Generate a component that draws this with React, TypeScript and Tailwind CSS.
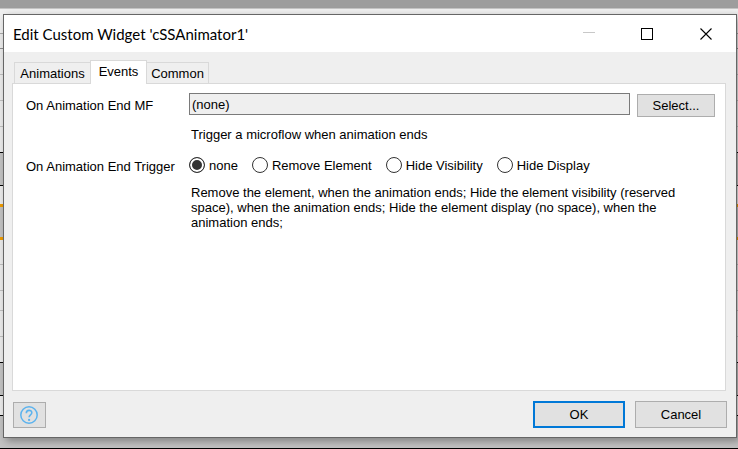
import { useState } from "react";

const ROWS = [
  "h-2 bg-[#9d9d9d]",
  "h-px bg-[#c4c4c4]",
  "h-6 bg-[#f0f0f0]",
  "h-px bg-[#a9a9a9]",
  "h-3.5 bg-[#ececec]",
  "h-px bg-[#8f8f8f]",
  "h-[25px] bg-[#ececec]",
  "h-px bg-[#c0c0c0]",
  "h-[25px] bg-[#ececec]",
  "h-px bg-[#c0c0c0]",
  "h-[25px] bg-[#ececec]",
  "h-px bg-[#c0c0c0]",
  "h-[25px] bg-[#ececec]",
  "h-px bg-black",
  "h-8 bg-[#c3c3c3]",
  "h-px bg-black",
  "h-[18px] bg-[#ececec]",
  "h-[3px] bg-[#f09c00]",
  "h-[30px] bg-[#c3c3c3]",
  "h-[3px] bg-[#f09c00]",
  "h-6 bg-[#ececec]",
  "h-px bg-[#c0c0c0]",
  "h-[25px] bg-[#ececec]",
  "h-px bg-[#c0c0c0]",
  "h-[19px] bg-[#ececec]",
  "h-px bg-[#c0c0c0]",
  "h-[25px] bg-[#ececec]",
  "h-px bg-[#c0c0c0]",
  "h-[25px] bg-[#ececec]",
  "h-px bg-black",
  "h-8 bg-[#c3c3c3]",
  "h-px bg-black",
  "h-[19px] bg-[#ececec]",
  "h-px bg-black",
  "h-8 bg-[#c3c3c3]",
  "h-px bg-black",
];

const TRIGGERS = ["none", "Remove Element", "Hide Visibility", "Hide Display"];

function TitleBar() {
  return (
    <header className="flex h-[37px] items-center justify-between bg-white pl-[9px]">
      <h1 className="font-['Lato','Open_Sans',sans-serif] text-[15px] leading-5">
        Edit Custom Widget 'cSSAnimator1'
      </h1>
      <div className="flex h-full">
        <button aria-label="Minimize" disabled className="flex w-[58px] items-center justify-center">
          <svg width="12" height="12" shapeRendering="crispEdges">
            <path d="M0 4.5h12" stroke="#c8c8c8" />
          </svg>
        </button>
        <button aria-label="Maximize" className="flex w-[58px] items-center justify-center">
          <svg width="12" height="12" fill="none" shapeRendering="crispEdges">
            <path d="M.5 .5h11v11h-11z" stroke="#000" />
          </svg>
        </button>
        <button aria-label="Close" className="flex w-[60px] items-center justify-center">
          <svg width="12" height="12" fill="none">
            <path d="M.5 .5l11 11M11.5 .5l-11 11" stroke="#000" strokeWidth="1.1" />
          </svg>
        </button>
      </div>
    </header>
  );
}

function Tabs() {
  return (
    <div role="tablist" className="relative z-10 -mb-px flex items-end pl-0.5">
      <button role="tab" aria-selected="false" className="h-[22px] w-[76px] border border-r-0 border-[#d9d9d9]">
        Animations
      </button>
      <button
        role="tab"
        aria-selected="true"
        className="h-6 w-[57px] border border-b-0 border-[#d9d9d9] bg-white pb-0.5"
      >
        Events
      </button>
      <button role="tab" aria-selected="false" className="h-[22px] w-[62px] border border-l-0 border-[#d9d9d9]">
        Common
      </button>
    </div>
  );
}

function EventsPanel() {
  const [trigger, setTrigger] = useState("none");
  return (
    <section
      role="tabpanel"
      className="grid grow grid-cols-[163px_1fr] content-start border border-[#d9d9d9] bg-white pt-[9px] pr-2.5 pl-[13px]"
    >
      <label htmlFor="microflow" className="pt-[5px]">
        On Animation End MF
      </label>
      <div className="flex items-start gap-[7px]">
        <input
          id="microflow"
          readOnly
          defaultValue="(none)"
          className="h-[22px] min-w-0 grow border border-[#7a7a7a] bg-[#efefef] px-0.5 outline-none"
        />
        <button className="mt-px h-[23px] w-[78px] border border-[#adadad] bg-[#e1e1e1]">Select...</button>
      </div>
      <p className="col-start-2 mt-2.5 pl-0.5">Trigger a microflow when animation ends</p>
      <span id="trigger-label" className="mt-[17px]">
        On Animation End Trigger
      </span>
      <div role="radiogroup" aria-labelledby="trigger-label" className="mt-[15px] flex gap-3.5">
        {TRIGGERS.map((name) => (
          <label key={name} className="flex h-4 items-center gap-1">
            <input
              type="radio"
              name="trigger"
              checked={trigger === name}
              onChange={() => setTrigger(name)}
              className="size-4 appearance-none rounded-full border border-[#333] bg-white checked:bg-[#333] checked:shadow-[inset_0_0_0_2px_white]"
            />
            {name}
          </label>
        ))}
      </div>
      <p className="col-start-2 mt-[11px] max-w-[500px] pl-0.5">
        Remove the element, when the animation ends; Hide the element visibility (reserved space), when the
        animation ends; Hide the element display (no space), when the animation ends;
      </p>
    </section>
  );
}

function Footer() {
  return (
    <footer className="flex items-end gap-2.5 pt-2.5 pl-px">
      <button
        aria-label="Help"
        className="mr-auto flex h-[26px] w-[33px] items-center justify-center border border-[#adadad] bg-[#e1e1e1]"
      >
        <svg width="19" height="18" fill="none" stroke="#5cb3ee">
          <circle cx="9" cy="9" r="8.2" strokeWidth="1.5" />
          <path d="M6.3 7.2C6.3 3.4 11.8 3.6 11.8 6.8C11.8 8.9 9.1 8.8 9.1 11.2" strokeWidth="1.6" />
          <path d="M9.1 12.9v2" strokeWidth="2" />
        </svg>
      </button>
      <button className="h-[27px] w-[92px] border-2 border-[#0078d7] bg-[#e1e1e1]">OK</button>
      <button className="h-[27px] w-[92px] border border-[#adadad] bg-[#e1e1e1]">Cancel</button>
    </footer>
  );
}

export default function App() {
  return (
    <div className="relative overflow-hidden font-['Liberation_Sans',Arial,sans-serif] text-[13px] leading-[15px] text-black">
      <div aria-hidden="true">
        {ROWS.map((row, i) => (
          <div key={i} className={row} />
        ))}
      </div>
      <main
        role="dialog"
        aria-label="Edit Custom Widget"
        className="absolute top-3.5 right-px bottom-[11px] left-[3px] flex flex-col border border-[#666] bg-[#efefef] shadow-[3px_3px_8px_rgba(0,0,0,0.35)]"
      >
        <TitleBar />
        <div className="flex grow flex-col pt-2 pr-[9px] pb-[9px] pl-2">
          <Tabs />
          <div className="flex grow flex-col pr-px">
            <EventsPanel />
          </div>
          <Footer />
        </div>
      </main>
    </div>
  );
}
